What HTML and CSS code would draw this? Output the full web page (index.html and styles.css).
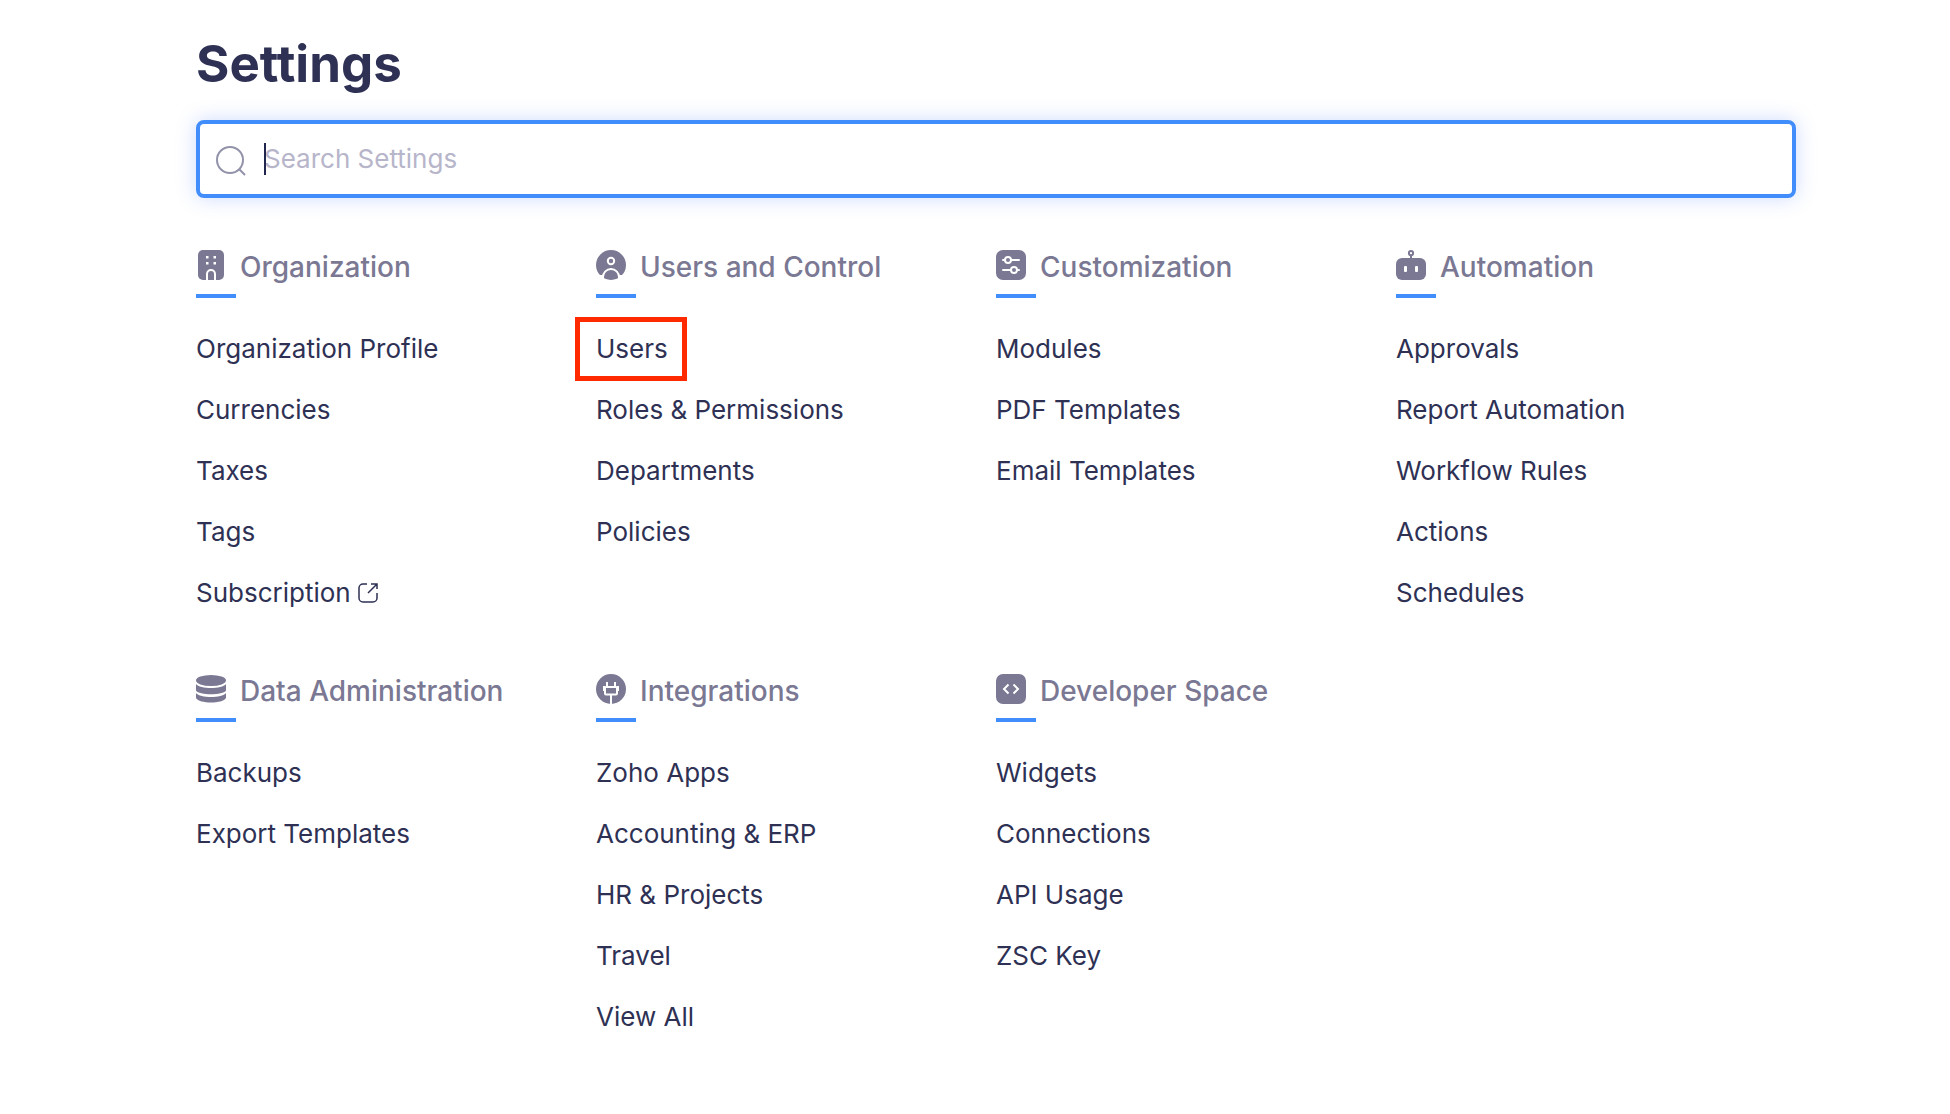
FILE: index.html
```html
<!DOCTYPE html>
<html lang="en">
<head>
  <meta charset="UTF-8" />
  <meta name="viewport" content="width=device-width, initial-scale=1.0"/>
  <title>Settings</title>
  <link rel="stylesheet" href="styles.css">
</head>
<body>

  <main class="settings">
    <h1>Settings</h1>

    <form class="search" role="search">
      <label for="search-input" aria-label="Search Settings">
        <svg class="search-icon" viewBox="0 0 30 30"><circle cx="14" cy="14" r="13"/><path d="M23 23l6 6"/></svg>
      </label>
      <div class="search-field">
        <input type="text" id="search-input" placeholder="Search Settings" />
        <span class="caret"></span>
      </div>
    </form>

    <div class="groups">
      <section class="group">
        <h2>
          <svg class="group-icon" viewBox="0 0 30 30">
            <rect x="2" width="26" height="30" rx="5"/>
            <g class="cut"><rect x="10" y="6" width="2.500" height="2.500"/><rect x="17.500" y="6" width="2.500" height="2.500"/><rect x="10" y="12" width="2.500" height="2.500"/><rect x="17.500" y="12" width="2.500" height="2.500"/></g>
            <path class="line" d="M11 30v-6a4 4 0 0 1 8 0v6"/>
          </svg>
          <span>Organization</span>
        </h2>
        <ul>
          <li><a href="#">Organization Profile</a></li>
          <li><a href="#">Currencies</a></li>
          <li><a href="#">Taxes</a></li>
          <li><a href="#">Tags</a></li>
          <li>
            <a href="#">Subscription
              <svg class="external-icon" viewBox="0 0 22 22"><path d="M10 2H6a4 4 0 0 0-4 4v10a4 4 0 0 0 4 4h10a4 4 0 0 0 4-4v-5M14 2h6v5M20 2l-9 9"/></svg>
            </a>
          </li>
        </ul>
      </section>

      <section class="group">
        <h2>
          <svg class="group-icon" viewBox="0 0 30 30">
            <circle cx="15" cy="15" r="15"/>
            <circle class="line" cx="15" cy="11" r="3.200"/>
            <path class="line" d="M7 30v-3a8 8 0 0 1 16 0v3"/>
            <path class="edge" d="M0 25h7v5H0zM23 25h7v5h-7z"/>
          </svg>
          <span>Users and Control</span>
        </h2>
        <ul>
          <li><a class="highlight" href="#">Users</a></li>
          <li><a href="#">Roles &amp; Permissions</a></li>
          <li><a href="#">Departments</a></li>
          <li><a href="#">Policies</a></li>
        </ul>
      </section>

      <section class="group">
        <h2>
          <svg class="group-icon" viewBox="0 0 30 30">
            <rect width="30" height="30" rx="7"/>
            <path class="line" d="M7 10h2M15 10h8M7 20h8M21 20h2" stroke-linecap="round"/>
            <circle class="line" cx="12" cy="10" r="3"/>
            <circle class="line" cx="18" cy="20" r="3"/>
          </svg>
          <span>Customization</span>
        </h2>
        <ul>
          <li><a href="#">Modules</a></li>
          <li><a href="#">PDF Templates</a></li>
          <li><a href="#">Email Templates</a></li>
        </ul>
      </section>

      <section class="group">
        <h2>
          <svg class="group-icon" viewBox="0 0 30 30">
            <rect y="8" width="30" height="22" rx="6"/>
            <path d="M14 5h2v4h-2z"/>
            <circle class="antenna" cx="15" cy="3.200" r="2.100"/>
            <rect class="cut" x="8" y="16" width="3" height="6" rx="1"/>
            <rect class="cut" x="19" y="16" width="3" height="6" rx="1"/>
          </svg>
          <span>Automation</span>
        </h2>
        <ul>
          <li><a href="#">Approvals</a></li>
          <li><a href="#">Report Automation</a></li>
          <li><a href="#">Workflow Rules</a></li>
          <li><a href="#">Actions</a></li>
          <li><a href="#">Schedules</a></li>
        </ul>
      </section>

      <section class="group">
        <h2>
          <svg class="group-icon" viewBox="0 0 30 30">
            <ellipse cx="15" cy="6.500" rx="15" ry="5.500"/>
            <path d="M0 10c4 5.400 26 5.400 30 0v6.500c-3 5-27 5-30 0z"/>
            <path d="M0 19c4 5.400 26 5.400 30 0v5c-3 6-27 6-30 0z"/>
          </svg>
          <span>Data Administration</span>
        </h2>
        <ul>
          <li><a href="#">Backups</a></li>
          <li><a href="#">Export Templates</a></li>
        </ul>
      </section>

      <section class="group">
        <h2>
          <svg class="group-icon" viewBox="0 0 30 30">
            <circle cx="15" cy="15" r="15"/>
            <rect class="line" x="9" y="13" width="12" height="7.500" rx="1"/>
            <path class="line" d="M11 8v5M19 8v5M15 20v10"/>
            <path class="cut" d="M7 12h2v5H7zM21 12h2v5h-2z"/>
          </svg>
          <span>Integrations</span>
        </h2>
        <ul>
          <li><a href="#">Zoho Apps</a></li>
          <li><a href="#">Accounting &amp; ERP</a></li>
          <li><a href="#">HR &amp; Projects</a></li>
          <li><a href="#">Travel</a></li>
          <li><a href="#">View All</a></li>
        </ul>
      </section>

      <section class="group">
        <h2>
          <svg class="group-icon" viewBox="0 0 30 30">
            <rect width="30" height="30" rx="7"/>
            <path class="line" d="M12.500 10.500L8 15l4.500 4.500M17.500 10.500L22 15l-4.500 4.500"/>
          </svg>
          <span>Developer Space</span>
        </h2>
        <ul>
          <li><a href="#">Widgets</a></li>
          <li><a href="#">Connections</a></li>
          <li><a href="#">API Usage</a></li>
          <li><a href="#">ZSC Key</a></li>
        </ul>
      </section>
    </div>
  </main>

</body>
</html>
```
FILE: styles.css
```css
* {
  box-sizing: border-box;
}

body {
  margin: 0;
  font-family: Inter, sans-serif;
  color: #2e3154;
  background-color: #fff;
}

.settings {
  padding: 32px 154px 48px 196px;
}

h1 {
  margin: 0 0 24px;
  font-size: 51px;
  line-height: 64px;
  font-weight: 700;
}

.search {
  display: flex;
  align-items: center;
  gap: 18px;
  height: 78px;
  padding: 0 16px;
  border: 4px solid #408dfb;
  border-radius: 8px;
  box-shadow: 0 0 20px rgba(64, 110, 251, 0.25);
}

.search label {
  display: flex;
}

.search-icon {
  width: 30px;
  height: 30px;
  margin-top: 4px;
  fill: none;
  stroke: #9292ab;
  stroke-width: 2;
}

.search-field {
  position: relative;
  flex: 1;
}

.search-field input {
  display: block;
  width: 100%;
  padding: 0;
  border: none;
  outline: none;
  background: none;
  font: inherit;
  font-size: 26px;
  line-height: 32px;
  color: inherit;
}

.search-field input::placeholder {
  color: #b7b5ca;
}

.caret {
  position: absolute;
  top: 0;
  left: 0;
  width: 2px;
  height: 32px;
  background-color: #21264e;
}

.groups {
  display: grid;
  grid-template-columns: repeat(4, 1fr);
  row-gap: 49px;
  margin-top: 50px;
}

.group h2 {
  display: flex;
  flex-wrap: wrap;
  align-items: center;
  column-gap: 14px;
  margin: 0 0 20px;
  font-size: 28px;
  line-height: 34px;
  font-weight: 500;
  color: #7a7893;
}

.group h2 span {
  padding-top: 2px;
}

/* short blue bar under each heading */
.group h2::after {
  content: "";
  flex: 0 0 40px;
  height: 4px;
  margin: 10px calc(100% - 40px) 0 0;
  background-color: #408dfb;
}

.group-icon {
  width: 30px;
  height: 30px;
  margin-bottom: 2px;
  fill: #7a7893;
}

.group-icon .cut,
.group-icon .edge {
  fill: #fff;
}

.group-icon .line {
  fill: none;
  stroke: #fff;
  stroke-width: 2;
}

.group-icon .antenna {
  fill: none;
  stroke: #7a7893;
  stroke-width: 2;
}

.group ul {
  margin: 0;
  padding: 0;
  list-style: none;
}

.group li {
  display: flex;
  align-items: center;
  height: 61px;
}

.group a {
  position: relative;
  display: flex;
  align-items: center;
  gap: 6px;
  font-size: 26px;
  line-height: 32px;
  color: inherit;
  text-decoration: none;
}

.group a:hover {
  color: #408dfb;
}

.external-icon {
  width: 22px;
  height: 22px;
  fill: none;
  stroke: currentColor;
  stroke-width: 1.5;
}

.highlight::after {
  content: "";
  position: absolute;
  inset: -16px -19px -16px -21px;
  border: 5px solid #ff2a00;
}
```
